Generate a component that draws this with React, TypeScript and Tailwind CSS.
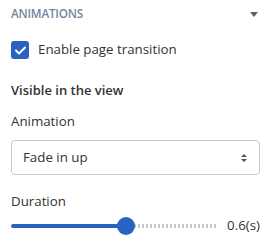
export default function App() {
  return (
    <div className="w-[271px] h-[247px] bg-white font-['Open_Sans',sans-serif] text-[#333] px-[11px]">
      <div className="flex items-center justify-between h-[27px] pt-[1px]">
        <span className="text-[11.7px] font-semibold text-[#6f86a0] tracking-[-0.2px]">ANIMATIONS</span>
        <svg width="8" height="5" viewBox="0 0 8 5" className="mr-[2px]">
          <path d="M0 0h8L4 5z" fill="#5f6368" />
        </svg>
      </div>
      <label className="flex items-center gap-[9px] mt-[14px] h-[18px]">
        <span className="w-[18px] h-[18px] rounded-[3px] bg-[#2a62c2] flex items-center justify-center">
          <svg width="11" height="9" viewBox="0 0 11 9">
            <path d="M1 4.5l3 3L10 1.5" stroke="white" strokeWidth="2" fill="none" strokeLinecap="round" strokeLinejoin="round" />
          </svg>
        </span>
        <span className="text-[13.3px]">Enable page transition</span>
      </label>
      <div className="mt-[21px] text-[13px] font-semibold leading-[20px]">Visible in the view</div>
      <div className="mt-[11px] text-[13.3px] leading-[20px]">Animation</div>
      <div className="mt-[9px] h-[35px] w-[249px] border border-[#c9c9c9] rounded-[4px] flex items-center justify-between pl-[11px] pr-[12px]">
        <span className="text-[13.3px]">Fade in up</span>
        <svg width="6" height="10" viewBox="0 0 6 10">
          <path d="M0 4L3 1 6 4z M0 6L3 9 6 6z" fill="#555" />
        </svg>
      </div>
      <div className="mt-[16px] text-[13.3px] leading-[20px]">Duration</div>
      <div className="flex items-center mt-[5px] h-[20px]">
        <div className="relative w-[209px] h-[4px]">
          <div className="absolute left-0 top-0 h-[4px] w-[115px] bg-[#2a62c2] rounded-full" />
          <div className="absolute left-[115px] top-0 h-[4px] right-0 bg-[repeating-linear-gradient(90deg,#c8c8c8_0_2px,transparent_2px_4px)]" />
          <div className="absolute left-[106px] top-[-7px] w-[18px] h-[18px] rounded-full bg-[#2a62c2]" />
        </div>
        <span className="ml-[10px] text-[13.3px]">0.6(s)</span>
      </div>
    </div>
  );
}
